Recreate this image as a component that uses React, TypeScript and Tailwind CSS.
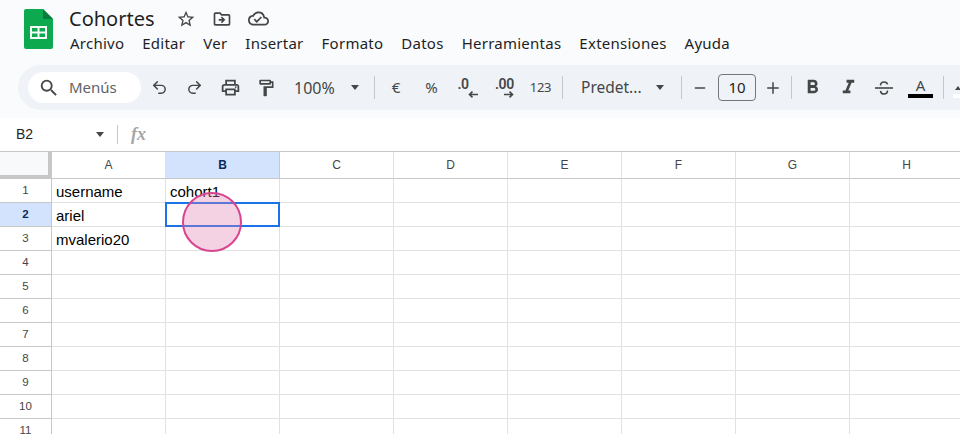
import type { ReactNode } from "react";
import { Minus, Plus, Redo2, Undo2 } from "lucide-react";
import {
  MdFormatBold,
  MdFormatItalic,
  MdOutlineCloudDone,
  MdOutlineDriveFileMove,
  MdOutlineFormatPaint,
  MdOutlineLocalPrintshop,
  MdOutlineStarBorder,
  MdSearch,
} from "react-icons/md";

const MENUS = ["Archivo", "Editar", "Ver", "Insertar", "Formato", "Datos", "Herramientas", "Extensiones", "Ayuda"];
const COLS = ["A", "B", "C", "D", "E", "F", "G", "H"];
const ROWS = [1, 2, 3, 4, 5, 6, 7, 8, 9, 10, 11];
const DATA: Record<string, string> = {
  A1: "username",
  B1: "cohort1",
  A2: "ariel",
  A3: "mvalerio20",
};

function SheetsLogo() {
  return (
    <svg width="29" height="40" viewBox="0 0 29 40" className="shrink-0">
      <path d="M2 0H19L29 10V38a2 2 0 0 1-2 2H2a2 2 0 0 1-2-2V2a2 2 0 0 1 2-2Z" fill="#0ca94f" />
      <path d="M19 0L29 10H19Z" fill="#0a7d3c" />
      <path d="M6 17H23V30H6Z" fill="#f4fbf6" />
      <path d="M8 19H13.5V22.5H8ZM15.5 19H21V22.5H15.5ZM8 24.5H13.5V28H8ZM15.5 24.5H21V28H15.5Z" fill="#0ca94f" />
    </svg>
  );
}

function StrikeIcon() {
  return (
    <svg width="18" height="16" viewBox="0 0 18 16" fill="none" stroke="#444746" strokeWidth="1.6">
      <path d="M0 8H18" />
      <path d="M5.5 5.5C5.5 3 7 2 9 2s3.2.9 3.5 2.4" />
      <path d="M5.5 10.8C5.8 13 7.2 14 9 14s3.5-1 3.5-3.4" />
    </svg>
  );
}

function Btn({ w = "w-[35px]", children }: { w?: string; children: ReactNode }) {
  return <div className={`${w} h-[30px] shrink-0 flex items-center justify-center text-[#444746]`}>{children}</div>;
}

function Sep({ className }: { className: string }) {
  return <div className={`w-px h-[23px] shrink-0 bg-[#c7c7c7] ${className}`} />;
}

function Caret({ className = "" }: { className?: string }) {
  return <div className={`w-0 h-0 shrink-0 border-x-[4.5px] border-x-transparent border-t-[5px] border-t-[#444746] ${className}`} />;
}

function DecimalIcon({ label, dir }: { label: string; dir: "left" | "right" }) {
  return (
    <div className={`w-[19px] flex flex-col items-start leading-none ${dir === "left" ? "-ml-[4px]" : "-ml-[6px]"}`}>
      <span className="text-[14px] font-semibold leading-[13px] tracking-[-0.4px] font-['Roboto',sans-serif]">{label}</span>
      <svg width="10" height="7" viewBox="0 0 10 7" fill="none" stroke="#444746" strokeWidth="1.6" className={dir === "left" ? "ml-[10px]" : "ml-[9px]"}>
        {dir === "left" ? <path d="M10 3.5H1.5M4.5 .7L1.5 3.5L4.5 6.3" /> : <path d="M0 3.5H8.5M5.5 .7L8.5 3.5L5.5 6.3" />}
      </svg>
    </div>
  );
}

function Header() {
  return (
    <div className="h-[65px] flex pl-6 pt-[9px] font-['Noto_Sans',sans-serif]">
      <SheetsLogo />
      <div className="ml-[17px] -mt-[3px]">
        <div className="flex items-center h-[25px]">
          <span className="text-[20px] text-[#1f1f1f] w-[107px] -ml-[1px]">Cohortes</span>
          <div className="w-[36px] flex text-[#444746]"><MdOutlineStarBorder size={20} /></div>
          <div className="w-[36px] flex text-[#444746]"><MdOutlineDriveFileMove size={20} /></div>
          <div className="flex text-[#444746]"><MdOutlineCloudDone size={21} /></div>
        </div>
        <div className="flex gap-[18px] text-[15px] leading-[25px] tracking-[0.25px] text-[#1f1f1f]">
          {MENUS.map((m) => (
            <span key={m}>{m}</span>
          ))}
        </div>
      </div>
    </div>
  );
}

function Toolbar() {
  return (
    <div className="ml-[18px] h-[45px] rounded-l-[23px] bg-[#eff3f8] flex items-center pl-[10px] text-[#444746] font-['Noto_Sans',sans-serif]">
      <div className="w-[113px] h-[31px] shrink-0 rounded-full bg-white flex items-center pl-[10px] text-[15px] text-[#5f6368]">
        <MdSearch size={22} className="text-[#444746]" />
        <span className="ml-[9px]">Menús</span>
      </div>
      <div className="w-[1px] shrink-0" />
      <Btn><Undo2 size={17} strokeWidth={2.1} /></Btn>
      <Btn><Redo2 size={17} strokeWidth={2.1} /></Btn>
      <Btn w="w-[37px]"><MdOutlineLocalPrintshop size={21} /></Btn>
      <Btn w="w-[33px]"><MdOutlineFormatPaint size={20} /></Btn>
      <span className="ml-[12px] w-[44px] shrink-0 text-[16px]">100%</span>
      <Caret className="ml-[13px]" />
      <Sep className="ml-[15px]" />
      <Btn w="w-[42px]"><span className="text-[15px]">€</span></Btn>
      <Btn w="w-[29px]"><span className="text-[15px]">%</span></Btn>
      <Btn w="w-[46px]"><DecimalIcon label=".0" dir="left" /></Btn>
      <Btn w="w-[31px]"><DecimalIcon label=".00" dir="right" /></Btn>
      <Btn w="w-[35px]"><span className="text-[13px] tracking-[-0.3px]">123</span></Btn>
      <Sep className="ml-[4px]" />
      <span className="ml-[18px] w-[75px] shrink-0 text-[15.5px] whitespace-nowrap">Predet...</span>
      <Caret />
      <Sep className="ml-[17px]" />
      <Btn w="w-[36px]"><Minus size={16} strokeWidth={2} /></Btn>
      <div className="w-[38px] h-[27px] shrink-0 border border-[#747775] rounded-[4px] flex items-center justify-center text-[15px] text-[#1f1f1f]">10</div>
      <Btn w="w-[33px]"><Plus size={18} strokeWidth={2} /></Btn>
      <Sep className="ml-[2px]" />
      <Btn w="w-[41px]"><MdFormatBold size={23} /></Btn>
      <Btn w="w-[31px]"><MdFormatItalic size={23} /></Btn>
      <Btn w="w-[40px]"><StrikeIcon /></Btn>
      <div className="ml-[4px] w-[25px] shrink-0 flex flex-col items-center self-end mb-[12px]">
        <span className="text-[15px] leading-[17px]">A</span>
        <div className="w-[25px] h-[4px] bg-black" />
      </div>
      <Sep className="ml-[10px]" />
      <div className="ml-[9px] w-[10px] shrink-0 flex flex-col items-center self-end mb-[12px]">
        <div className="w-0 h-0 border-x-[3px] border-x-transparent border-b-[4px] border-b-[#444746] mb-[4px]" />
        <div className="w-[10px] h-[4px] bg-white" />
      </div>
    </div>
  );
}

function FormulaBar() {
  return (
    <div className="mt-[8px] h-[34px] bg-white flex items-center pl-[16px] border-b border-[#c7c7c7] font-['Liberation_Sans',sans-serif]">
      <span className="w-[80px] text-[14px] text-[#1f1f1f]">B2</span>
      <Caret />
      <div className="ml-[13px] w-px h-[19px] bg-[#c7c7c7]" />
      <span className="ml-[13px] text-[18px] italic font-bold text-[#a6a6a6] font-['Liberation_Serif',serif]">fx</span>
    </div>
  );
}

function Grid() {
  return (
    <div className="relative flex-1 overflow-hidden bg-white font-['Liberation_Sans',sans-serif]">
      <div className="grid grid-cols-[52px_repeat(8,114px)] grid-rows-[27px] auto-rows-[24px]">
        <div className="bg-[#f8f9fa] border-r-[4px] border-b-[4px] border-[#c7c7c7]" />
        {COLS.map((c) => (
          <div
            key={c}
            className={`flex items-center justify-center text-[12px] border-r border-b ${
              c === "B" ? "bg-[#d3e3fd] font-bold text-[#0b2a57] border-[#c7c7c7]" : "text-[#444746] border-[#c7c7c7] border-r-[#e1e1e1]"
            }`}
          >
            {c}
          </div>
        ))}
        {ROWS.map((r) => (
          <div key={r} className="contents">
            <div
              className={`flex items-center justify-center text-[11.5px] border-r border-b border-[#c7c7c7] ${
                r === 2 ? "bg-[#d3e3fd] font-bold text-[#0b2a57]" : "text-[#444746]"
              }`}
            >
              {r}
            </div>
            {COLS.map((c) => {
              const selected = c === "B" && r === 2;
              return (
                <div key={c} className="relative flex items-center pl-[4px] pt-[4px] text-[15px] text-black border-r border-b border-[#e1e1e1] whitespace-nowrap">
                  {DATA[`${c}${r}`]}
                  {selected && <div className="absolute -left-px -top-px -right-px -bottom-px border-2 border-[#1a73e8]" />}
                </div>
              );
            })}
          </div>
        ))}
      </div>
      {/* cursor highlight */}
      <div className="absolute left-[182px] top-[40px] w-[60px] h-[60px] rounded-full border-2 border-[#d9448f] bg-[#e27fb0]/35" />
    </div>
  );
}

export default function App() {
  return (
    <div className="w-[960px] h-[434px] overflow-hidden bg-[#f9fbfd] flex flex-col">
      <Header />
      <Toolbar />
      <FormulaBar />
      <Grid />
    </div>
  );
}
